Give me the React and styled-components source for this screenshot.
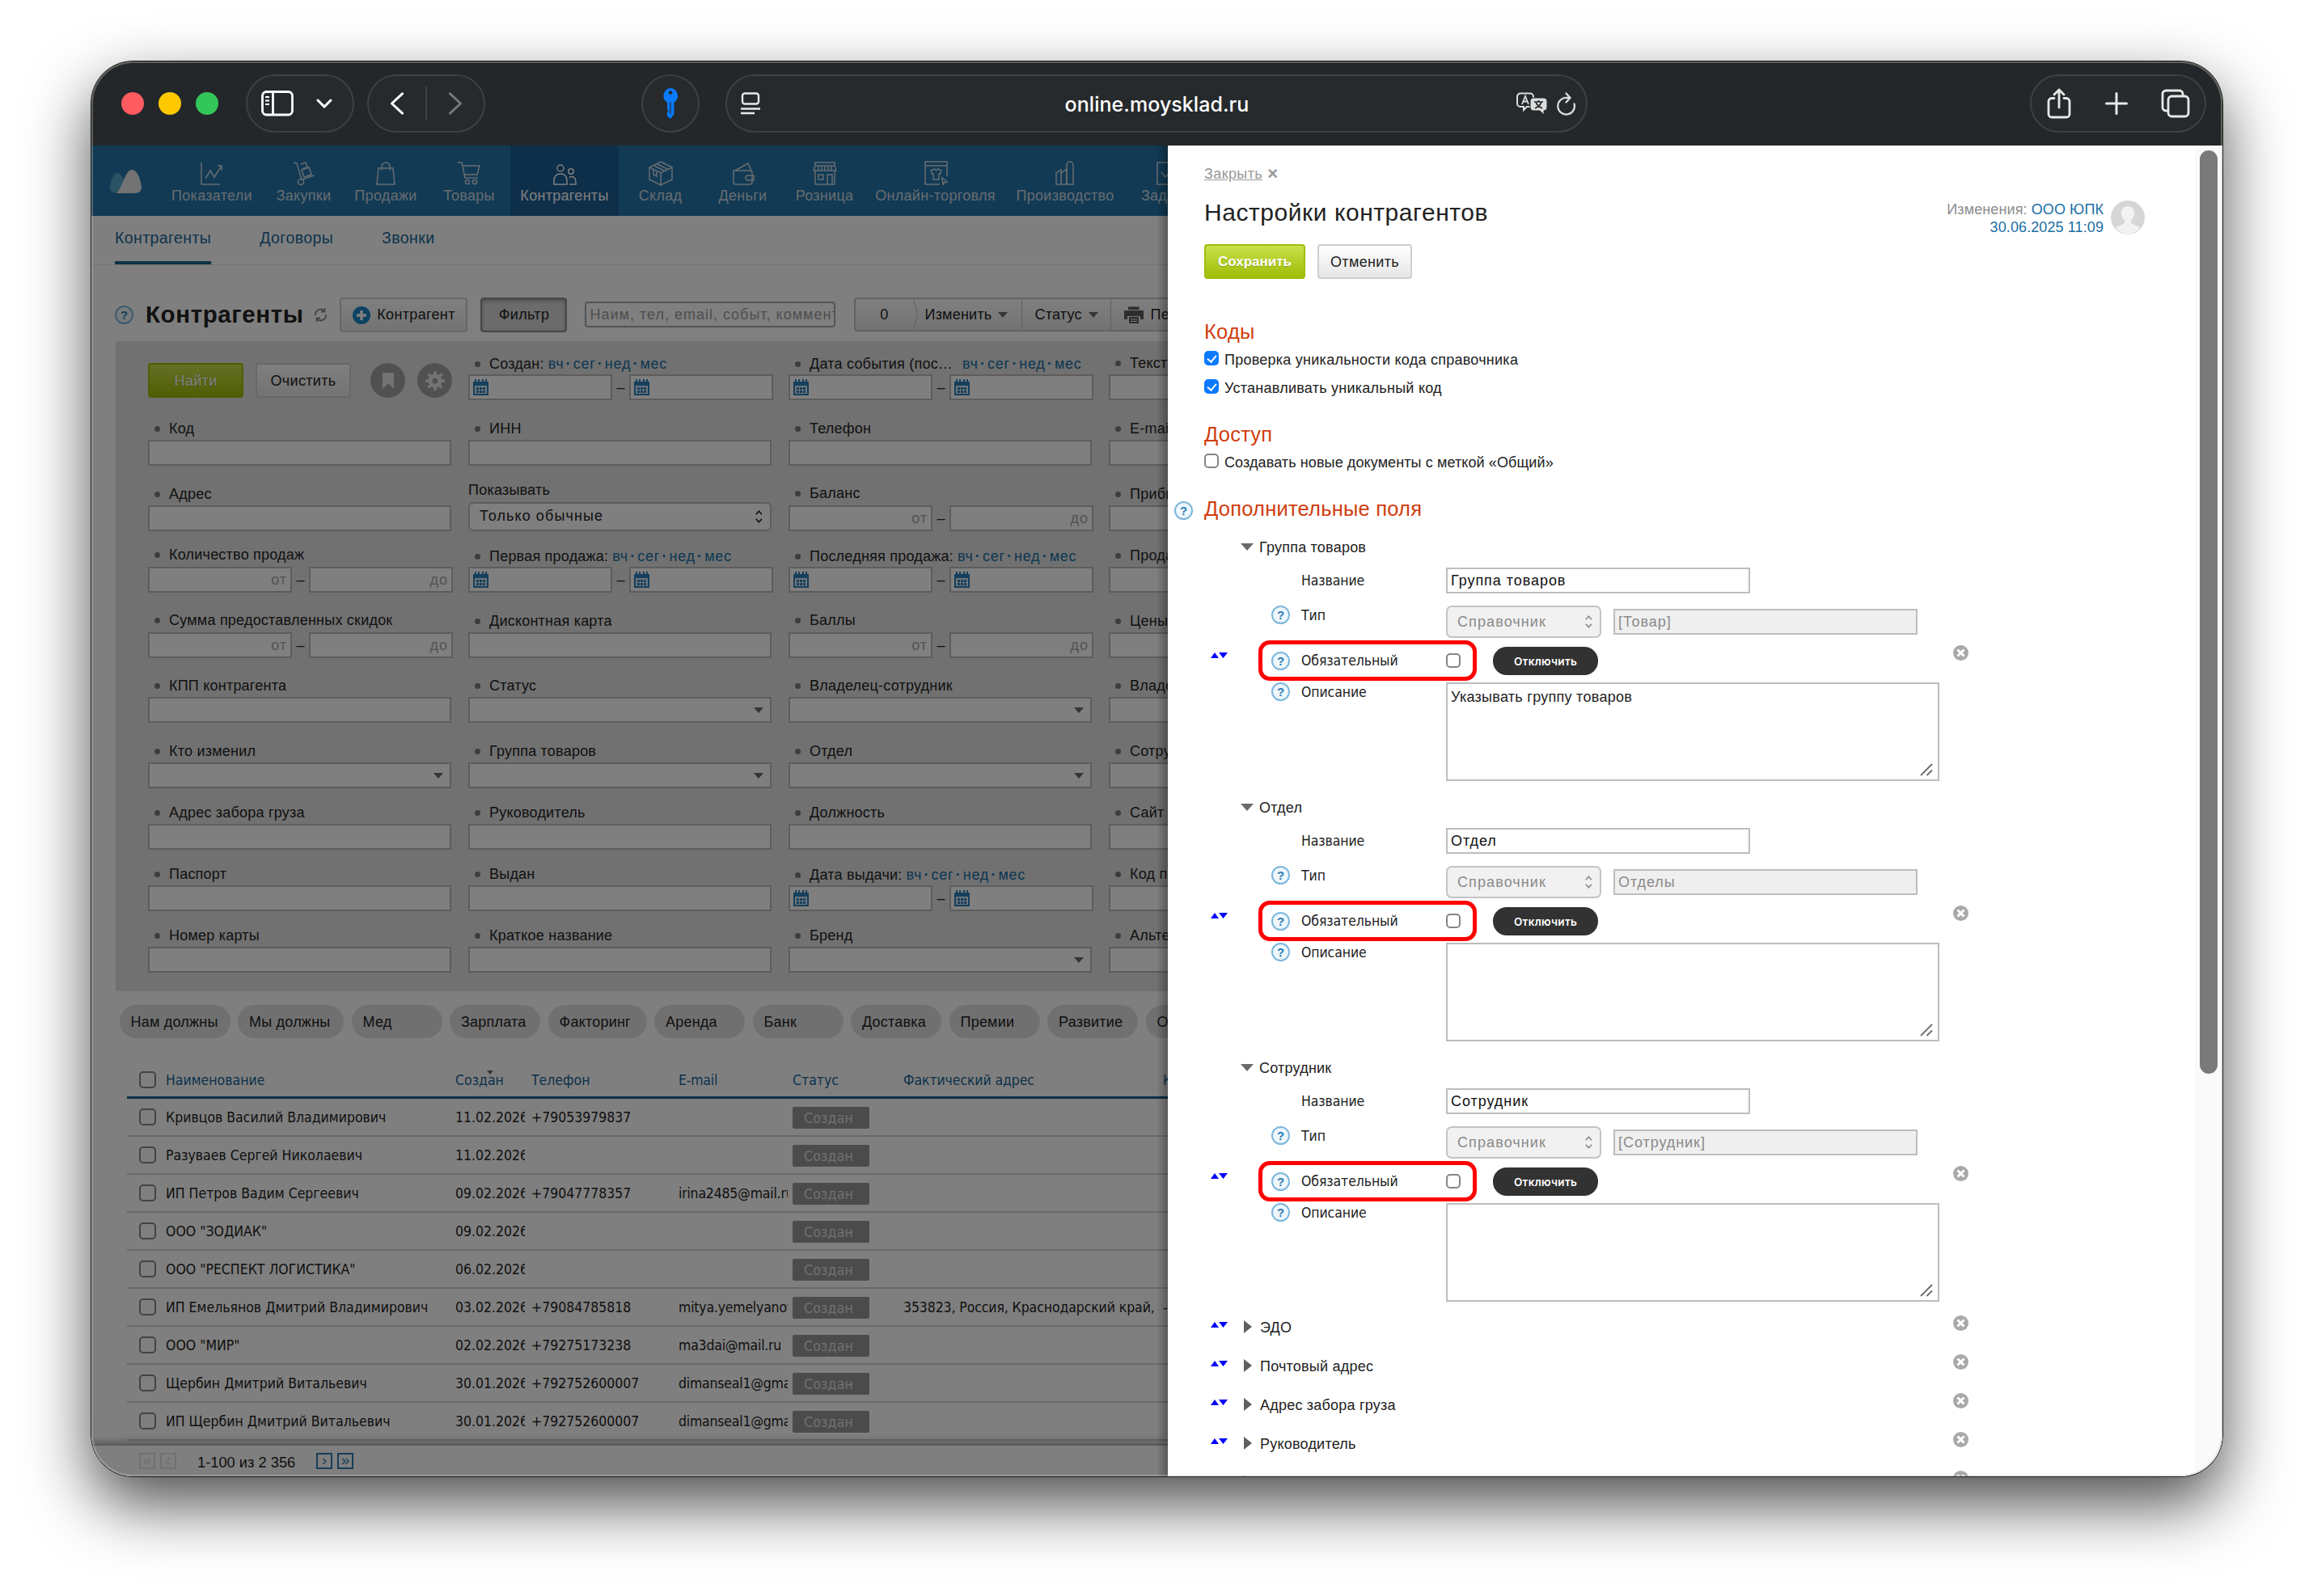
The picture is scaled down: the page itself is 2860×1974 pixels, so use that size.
import { Fragment } from "react";
import styled, { createGlobalStyle, css } from "styled-components";

const sans = `"Liberation Sans", Arial, sans-serif`;
const tahoma = `"DejaVu Sans Condensed", "DejaVu Sans", sans-serif`;

const sections = [
  { label: "Показатели", width: 128, icon: "chart" },
  { label: "Закупки", width: 99, icon: "cart2" },
  { label: "Продажи", width: 104, icon: "bag" },
  { label: "Товары", width: 102, icon: "cart" },
  { label: "Контрагенты", width: 134, icon: "people", active: true },
  { label: "Склад", width: 103, icon: "box" },
  { label: "Деньги", width: 101, icon: "wallet" },
  { label: "Розница", width: 101, icon: "shop" },
  { label: "Онлайн-торговля", width: 173, icon: "online" },
  { label: "Производство", width: 148, icon: "factory" },
  { label: "Задачи", width: 102, icon: "task" },
];

const filterRows = [
  [
    { type: "actions" },
    { label: "Создан:", type: "dates" },
    { label: "Дата события (пос…", type: "dates", wide: true },
    { label: "Текст события" },
  ],
  [
    { label: "Код" },
    { label: "ИНН" },
    { label: "Телефон" },
    { label: "E-mail" },
  ],
  [
    { label: "Адрес" },
    { label: "Показывать", type: "native" },
    { label: "Баланс", type: "range" },
    { label: "Прибыль" },
  ],
  [
    { label: "Количество продаж", type: "range" },
    { label: "Первая продажа:", type: "dates" },
    { label: "Последняя продажа:", type: "dates" },
    { label: "Продажи" },
  ],
  [
    { label: "Сумма предоставленных скидок", type: "range" },
    { label: "Дисконтная карта" },
    { label: "Баллы", type: "range" },
    { label: "Цены" },
  ],
  [
    { label: "КПП контрагента" },
    { label: "Статус", type: "combo" },
    { label: "Владелец-сотрудник", type: "combo" },
    { label: "Владелец-отдел", type: "combo" },
  ],
  [
    { label: "Кто изменил", type: "combo" },
    { label: "Группа товаров", type: "combo" },
    { label: "Отдел", type: "combo" },
    { label: "Сотрудник", type: "combo" },
  ],
  [
    { label: "Адрес забора груза" },
    { label: "Руководитель" },
    { label: "Должность" },
    { label: "Сайт" },
  ],
  [
    { label: "Паспорт" },
    { label: "Выдан" },
    { label: "Дата выдачи:", type: "dates" },
    { label: "Код подразделения" },
  ],
  [
    { label: "Номер карты" },
    { label: "Краткое название" },
    { label: "Бренд", type: "combo" },
    { label: "Альтернативное" },
  ],
];

const chips = [
  { label: "Нам должны", width: 137 },
  { label: "Мы должны", width: 131 },
  { label: "Мед", width: 112 },
  { label: "Зарплата", width: 112 },
  { label: "Факторинг", width: 122 },
  { label: "Аренда", width: 112 },
  { label: "Банк", width: 112 },
  { label: "Доставка", width: 112 },
  { label: "Премии", width: 112 },
  { label: "Развитие", width: 112 },
  { label: "Офис", width: 112 },
];

const rows = [
  ["Кривцов Василий Владимирович", "11.02.2026", "+79053979837", ""],
  ["Разуваев Сергей Николаевич", "11.02.2026", "", ""],
  ["ИП Петров Вадим Сергеевич", "09.02.2026", "+79047778357", "irina2485@mail.ru"],
  ['ООО "ЗОДИАК"', "09.02.2026", "", ""],
  ['ООО "РЕСПЕКТ ЛОГИСТИКА"', "06.02.2026", "", ""],
  [
    "ИП Емельянов Дмитрий Владимирович",
    "03.02.2026",
    "+79084785818",
    "mitya.yemelyanov@mail.ru",
    "353823, Россия, Краснодарский край,",
    "-",
  ],
  ['ООО "МИР"', "02.02.2026", "+79275173238", "ma3dai@mail.ru"],
  ["Щербин Дмитрий Витальевич", "30.01.2026", "+792752600007", "dimanseal1@gmail.com"],
  ["ИП Щербин Дмитрий Витальевич", "30.01.2026", "+792752600007", "dimanseal1@gmail.com"],
];

const fieldGroups = [
  { title: "Группа товаров", ref: "[Товар]", note: "Указывать группу товаров" },
  { title: "Отдел", ref: "Отделы", note: "" },
  { title: "Сотрудник", ref: "[Сотрудник]", note: "" },
];

const collapsedFields = [
  "ЭДО",
  "Почтовый адрес",
  "Адрес забора груза",
  "Руководитель",
  "Должность",
];

const sectionIcons = {
  chart: (
    <>
      <path d="M2 2v27h23" />
      <path d="M7 22l6-10 5 8 9-14M22 6h5v6" />
    </>
  ),
  cart2: (
    <>
      <path d="M2 2l4 1 6 20M13 23l14-5" />
      <circle cx="11" cy="26" r="3.5" />
      <path d="M12 11l9-3 3 9-9 3zM11 4l6-2 2 6-6 2" />
    </>
  ),
  bag: (
    <>
      <path d="M6 9h18l2 20H4z" />
      <path d="M10 12V7a5 5 0 0 1 10 0v5" />
    </>
  ),
  cart: (
    <>
      <path d="M1 2h5l4 19h16M7 6h21l-3 11H9" />
      <circle cx="13" cy="26" r="2.6" />
      <circle cx="22" cy="26" r="2.6" />
    </>
  ),
  people: (
    <>
      <circle cx="10" cy="9" r="4" />
      <path d="M2 29v-4c0-6 3-9 8-9s8 3 8 9v4z" />
      <circle cx="23" cy="13" r="3.2" />
      <path d="M21 20c5-1.500 8 1 8 6v3h-8" />
    </>
  ),
  box: (
    <>
      <path d="M15 1l14 7v15l-14 7L1 23V8zM1 8l14 7 14-7M15 15v15" />
      <path d="M6 5.500l14 7M10 3.500l14 7M6 11v6l4 2v-6" />
    </>
  ),
  wallet: (
    <>
      <path d="M3 12h20a3 3 0 0 1 3 3v11a3 3 0 0 1-3 3H6a3 3 0 0 1-3-3zM3 13L21 3l4 9" />
      <path d="M28 18h-7a3 3 0 0 0 0 6h7z" />
    </>
  ),
  shop: (
    <>
      <path d="M3 2h24v4H3zM3 6l-2 6h28l-2-6M7 6v6M11 6v6M15 6v6M19 6v6M23 6v6" />
      <path d="M3 12v17h24V12M7 17h6v6H7zM18 29V17h6v12" />
    </>
  ),
  online: (
    <>
      <path d="M20 29H2V1h27v18M2 6h27" />
      <path d="M9 12l4-2 2.500 2L18 10l4 2-1.500 4H19v7h-7v-7h-1.500z" />
      <path d="M23 21l6 5-4 1-1 3z" />
    </>
  ),
  factory: (
    <>
      <path d="M4 29V15l6-4v4l7-5v19z" />
      <path d="M17 29V5a3.500 3.500 0 0 1 8 0v24zM10 15v14" />
    </>
  ),
  task: <path d="M4 2h22v27H4zM9 14l5 6 8-10" />,
};

function Help() {
  return <HelpBadge>?</HelpBadge>;
}

function Spinner({ size = 18 }) {
  return (
    <svg width={size * 0.6} height={size} viewBox="0 0 12 20" fill="none">
      <path
        d="M2 7l4-4.500L10 7M2 13l4 4.500L10 13"
        stroke="currentColor"
        strokeWidth="1.800"
      />
    </svg>
  );
}

function Calendar() {
  return (
    <svg width="19" height="20" viewBox="0 0 19 20">
      <path
        d="M0 3h2V0h2v3h2V0h2v3h3V0h2v3h2V0h2v3h2v17H0z"
        fill="#2d7fb8"
      />
      <path d="M2 8h15v10H2z" fill="#dcebf5" />
      <path
        d="M4 10h3v3H4zM8 10h3v3H8zM12 10h3v3h-3zM4 14h3v3H4zM8 14h3v3H8zM12 14h3v3h-3z"
        fill="#2d7fb8"
      />
    </svg>
  );
}

function FilterCell({ cell }) {
  const { label, type, wide } = cell;

  if (type === "actions") {
    return (
      <FilterActions>
        <Button primary width={118}>
          Найти
        </Button>
        <Button width={118}>Очистить</Button>
        <RoundButton first>
          <svg width="16" height="22" viewBox="0 0 16 22">
            <path d="M1 1h14v20l-7-7-7 7z" fill="#e6e6e6" />
          </svg>
        </RoundButton>
        <RoundButton>
          <svg width="26" height="26" viewBox="0 0 26 26">
            <circle cx="13" cy="13" r="6" fill="none" stroke="#e6e6e6" strokeWidth="5" />
            <path
              d="M13 1v24M1 13h24M4.500 4.500l17 17M21.500 4.500l-17 17"
              stroke="#e6e6e6"
              strokeWidth="3.500"
            />
            <circle cx="13" cy="13" r="3.500" fill="#a3a3a3" />
          </svg>
        </RoundButton>
      </FilterActions>
    );
  }

  return (
    <Cell>
      <CellLabel type={type}>
        {type !== "native" && <Bullet />}
        {label}
        {type === "dates" && (
          <Periods wide={wide}>
            вч<i>·</i>сег<i>·</i>нед<i>·</i>мес
          </Periods>
        )}
      </CellLabel>
      {type === "dates" && (
        <Pair>
          <FilterInput>
            <Calendar />
          </FilterInput>
          <Dash>–</Dash>
          <FilterInput>
            <Calendar />
          </FilterInput>
        </Pair>
      )}
      {type === "range" && (
        <Pair>
          <FilterInput end>от</FilterInput>
          <Dash>–</Dash>
          <FilterInput end>до</FilterInput>
        </Pair>
      )}
      {type === "native" && (
        <NativeSelect>
          Только обычные
          <Spinner />
        </NativeSelect>
      )}
      {type === "combo" && (
        <FilterInput end>
          <Caret />
        </FilterInput>
      )}
      {!type && <FilterInput />}
    </Cell>
  );
}

function FieldGroup({ group }) {
  return (
    <Group>
      <Handle top={152}>
        <MoveIcon />
      </Handle>
      <GroupBody>
        <GroupTitle>
          <Caret big />
          {group.title}
        </GroupTitle>
        <FieldRow height={38} center>
          <span />
          <FieldLabel>Название</FieldLabel>
          <TextInput>{group.title}</TextInput>
        </FieldRow>
        <FieldRow height={55} top={12}>
          <Help />
          <FieldLabel>Тип</FieldLabel>
          <TypeFields>
            <DisabledSelect>
              Справочник
              <Spinner />
            </DisabledSelect>
            <TextInput disabled>{group.ref}</TextInput>
          </TypeFields>
        </FieldRow>
        <RequiredRow>
          <Highlight>
            <Help />
            <FieldLabel>Обязательный</FieldLabel>
            <Checkbox />
          </Highlight>
          <DarkButton>Отключить</DarkButton>
        </RequiredRow>
        <FieldRow height={124} top={2}>
          <Help />
          <FieldLabel>Описание</FieldLabel>
          <TextArea>
            {group.note}
            <svg width="16" height="16" viewBox="0 0 16 16">
              <path d="M1 15L15 1M8.500 15L15 8.500" stroke="#6b6b6b" strokeWidth="1.800" />
            </svg>
          </TextArea>
        </FieldRow>
      </GroupBody>
      <Remove top={143} />
    </Group>
  );
}

function MoveIcon() {
  return (
    <svg width="21" height="7" viewBox="0 0 21 7">
      <path d="M0 7l5-7 5 7zM10 0h11l-5.500 7z" fill="#0000ff" />
    </svg>
  );
}

function Remove({ top }) {
  return (
    <RemoveSlot top={top}>
      <svg width="19" height="19" viewBox="0 0 19 19">
        <circle cx="9.500" cy="9.500" r="9.500" fill="#a9a9a9" />
        <path d="M5.500 5.500l8 8M13.500 5.500l-8 8" stroke="#fff" strokeWidth="3" />
      </svg>
    </RemoveSlot>
  );
}

function Toolbar() {
  return (
    <Bar>
      <Lights>
        <Light color="#ff5b60" />
        <Light color="#fdc800" />
        <Light color="#33c759" />
      </Lights>
      <Pill width={134} left={34} pad="0 25px 0 17px">
        <svg width="40" height="32" viewBox="0 0 40 32" fill="none" stroke="#fff" strokeWidth="2.800">
          <rect x="1.500" y="1.500" width="37" height="28.500" rx="5" />
          <path d="M14.500 2v28" />
          <path d="M5 8h5M5 12.500h5M5 17h5" strokeWidth="2" />
        </svg>
        <svg width="20" height="12" viewBox="0 0 20 12" fill="none" stroke="#fff" strokeWidth="3" strokeLinecap="round">
          <path d="M2 2l8 8 8-8" />
        </svg>
      </Pill>
      <Pill width={146} left={16} pad="0 26px">
        <svg width="18" height="28" viewBox="0 0 18 30" fill="none" stroke="#fff" strokeWidth="3.200" strokeLinecap="round" strokeLinejoin="round">
          <path d="M16 2L2 15l14 13" />
        </svg>
        <PillDivider />
        <svg width="18" height="28" viewBox="0 0 18 30" fill="none" stroke="#75797b" strokeWidth="3.200" strokeLinecap="round" strokeLinejoin="round">
          <path d="M2 2l14 13L2 28" />
        </svg>
      </Pill>
      <Pill width={72} left={193} pad="0 24px">
        <svg width="20" height="38" viewBox="0 0 20 38">
          <path
            d="M10 0a9.500 9.500 0 0 1 4.500 17.500V32L10 38l-4-3.500V30l2-2-2-2V17.500A9.500 9.500 0 0 1 10 0z"
            fill="#0a7aff"
          />
          <circle cx="10" cy="5.500" r="2.300" fill="#24282a" />
          <path d="M10 17v15" stroke="#24282a" strokeWidth="1.200" />
        </svg>
      </Pill>
      <Pill width={1066} left={32} pad="0 12px 0 17px">
        <svg width="24" height="28" viewBox="0 0 24 28" fill="none" stroke="#e8e8e8" strokeWidth="2.400">
          <rect x="2" y="1.500" width="20" height="13" rx="3" />
          <path d="M0 20.500h24M0 26h17" />
        </svg>
        <Url>online.moysklad.ru</Url>
        <UrlIcons>
          <svg width="39" height="29" viewBox="0 0 39 29">
            <path
              d="M5 1.500h12a4 4 0 0 1 4 4V14a4 4 0 0 1-4 4h-4l-4 4v-4H5a4 4 0 0 1-4-4V5.500a4 4 0 0 1 4-4z"
              fill="none"
              stroke="#dcdcdc"
              strokeWidth="2"
            />
            <path d="M7 15l4-10 4 10M8.500 11.500h5" fill="none" stroke="#dcdcdc" strokeWidth="1.800" />
            <path
              d="M21 7h13a4 4 0 0 1 4 4v8a4 4 0 0 1-4 4v5l-5-5h-8a4 4 0 0 1-4-4v-8a4 4 0 0 1 4-4z"
              fill="#dcdcdc"
              stroke="#262a2c"
            />
            <path d="M22 12h11M27.500 10v2M31 12c-1 4-4 6-8 8M24 12c1 4 4 6 8 8" fill="none" stroke="#262a2c" strokeWidth="1.700" />
          </svg>
          <svg width="24" height="29" viewBox="0 0 24 29" fill="none" stroke="#dcdcdc" strokeWidth="2.300" strokeLinecap="round">
            <path d="M21.500 14.500a10.300 10.300 0 1 1-9-7.500H16M11.500 1.500l5 5.500-5 5.500" />
          </svg>
        </UrlIcons>
      </Pill>
      <Pill width={218} left={547} pad="0 18px 0 19px">
        <svg width="30" height="38" viewBox="0 0 30 38" fill="none" stroke="#e8e8e8" strokeWidth="2.800" strokeLinecap="round" strokeLinejoin="round">
          <path d="M9 12.500H6a4 4 0 0 0-4 4V32a4 4 0 0 0 4 4h18a4 4 0 0 0 4-4V16.500a4 4 0 0 0-4-4h-3M15 24V2M9 8l6-6 6 6" />
        </svg>
        <svg width="28" height="28" viewBox="0 0 28 28" stroke="#e8e8e8" strokeWidth="3" strokeLinecap="round">
          <path d="M14 1.500v25M1.500 14h25" />
        </svg>
        <svg width="36" height="36" viewBox="0 0 36 36" fill="none" stroke="#e8e8e8" strokeWidth="2.800">
          <path d="M8.500 27H6a4 4 0 0 1-4-4V6a4 4 0 0 1 4-4h17a4 4 0 0 1 4 4v2.500" />
          <rect x="9" y="9" width="25" height="25" rx="4.500" />
        </svg>
      </Pill>
    </Bar>
  );
}

function Drawer() {
  return (
    <DrawerPanel>
      <DrawerHead>
        <div>
          <CloseLink>
            <u>Закрыть</u>
            <b>×</b>
          </CloseLink>
          <DrawerTitle>Настройки контрагентов</DrawerTitle>
          <DrawerButtons>
            <Button primary width={125}>
              <b>Сохранить</b>
            </Button>
            <Button width={117}>Отменить</Button>
          </DrawerButtons>
        </div>
        <Changes>
          <div>
            Изменения: <span>ООО ЮПК</span>
            <br />
            <span>30.06.2025 11:09</span>
          </div>
          <svg width="42" height="42" viewBox="0 0 42 42">
            <circle cx="21" cy="21" r="21" fill="#d6d6d6" />
            <path
              d="M21 7c5 0 8 3.500 8 9 0 4-1.500 7-4 9v3l11 5.500A21 21 0 0 1 21 42 21 21 0 0 1 6 33.500L17 28v-3c-2.500-2-4-5-4-9 0-5.500 3-9 8-9z"
              fill="#f2f2f2"
            />
          </svg>
        </Changes>
      </DrawerHead>

      <Settings>
        <SectionTitle>Коды</SectionTitle>
        <Option>
          <Checkbox checked />
          Проверка уникальности кода справочника
        </Option>
        <Option>
          <Checkbox checked />
          Устанавливать уникальный код
        </Option>
        <SectionTitle top={23}>Доступ</SectionTitle>
        <Option tight>
          <Checkbox />
          Создавать новые документы с меткой «Общий»
        </Option>
        <SectionTitle top={23} help>
          <Help />
          Дополнительные поля
        </SectionTitle>
      </Settings>

      {fieldGroups.map((group) => (
        <FieldGroup key={group.title} group={group} />
      ))}
      {collapsedFields.map((title) => (
        <Group key={title} collapsed>
          <Handle top={14}>
            <MoveIcon />
          </Handle>
          <CollapsedTitle>
            <svg width="10" height="16" viewBox="0 0 10 16">
              <path d="M0 0l10 8-10 8z" fill="#5f5f5f" />
            </svg>
            {title}
          </CollapsedTitle>
          <Remove top={6} />
        </Group>
      ))}
      <ScrollTrack>
        <ScrollThumb />
      </ScrollTrack>
    </DrawerPanel>
  );
}

export default function App() {
  return (
    <Desktop>
      <GlobalStyle />
      <Window>
        <Toolbar />
        <Content>
          <Page>
            <MainNav>
              <Logo>
                <svg width="40" height="30" viewBox="0 0 40 30">
                  <path d="M0 22C1 12 5 4 9 4c4 0 8 6 9 12l-6 12H7c-5 0-7-2-7-6z" fill="#52a5c9" />
                  <path d="M7 29C14 28 18 0 27 0c7 0 11 12 12 21 0 5-3 8-8 8z" fill="#e6e6e6" />
                </svg>
              </Logo>
              {sections.map((item) => (
                <NavItem key={item.label} width={item.width} active={item.active}>
                  <svg width="30" height="31" viewBox="0 0 30 31" fill="none" stroke="currentColor" strokeWidth="1.500">
                    {sectionIcons[item.icon]}
                  </svg>
                  {item.label}
                </NavItem>
              ))}
            </MainNav>
            <SubNav>
              <SubNavItem active>Контрагенты</SubNavItem>
              <SubNavItem>Договоры</SubNavItem>
              <SubNavItem>Звонки</SubNavItem>
            </SubNav>

            <Heading>
              <Help />
              <h1>Контрагенты</h1>
              <svg width="17" height="17" viewBox="0 0 17 17" fill="none" stroke="#8c8c8c" strokeWidth="1.800">
                <path d="M2 9a6.500 6.500 0 0 1 11-5.500M15 8A6.500 6.500 0 0 1 4 13.500M13.500 0v4.500H9M3.500 17v-4.500H8" />
              </svg>
              <Button width={158} left={15}>
                <svg width="22" height="22" viewBox="0 0 22 22">
                  <circle cx="11" cy="11" r="11" fill="#1a86c2" />
                  <path d="M11 5v12M5 11h12" stroke="#fff" strokeWidth="3.500" />
                </svg>
                Контрагент
              </Button>
              <Button pressed width={107} left={16}>
                Фильтр
              </Button>
              <Search>Наим, тел, email, событ, комментарий</Search>
              <ButtonGroup>
                <GroupCount>0</GroupCount>
                <svg width="8" height="40" viewBox="0 0 8 40" fill="none" stroke="#c4c4c4">
                  <path d="M0 0l6 20-6 20" />
                </svg>
                <GroupButton width={127}>
                  Изменить <Caret />
                </GroupButton>
                <GroupButton width={110} pad={15}>
                  Статус <Caret />
                </GroupButton>
                <GroupButton width={130} pad={16}>
                  <svg width="24" height="23" viewBox="0 0 24 23">
                    <path d="M5 1h14v4H5zM0 6h24v11h-4v-4H4v4H0zM6 14h12v8H6z" fill="#5c5c5c" />
                    <path d="M5 1h14v4M8 17h8M8 19.500h8" stroke="#e6e6e6" strokeWidth="1" fill="none" />
                  </svg>
                  Печать
                </GroupButton>
              </ButtonGroup>
            </Heading>

            <Filter>
              {filterRows.map((row, i) => (
                <Fragment key={i}>
                  {row.map((cell, j) => (
                    <FilterCell key={j} cell={cell} />
                  ))}
                </Fragment>
              ))}
            </Filter>

            <Chips>
              {chips.map((chip) => (
                <Chip key={chip.label} width={chip.width}>
                  {chip.label}
                </Chip>
              ))}
            </Chips>

            <Table>
              <TableHead>
                <Checkbox large />
                <span>Наименование</span>
                <SortCell>Создан</SortCell>
                <span>Телефон</span>
                <span>E-mail</span>
                <span>Статус</span>
                <span>Фактический адрес</span>
                <span>Комментарий</span>
              </TableHead>
              {rows.map(([name, created, phone, email, address, comment]) => (
                <TableRow key={name}>
                  <Checkbox large />
                  <span>{name}</span>
                  <span>{created}</span>
                  <span>{phone}</span>
                  <span>{email}</span>
                  <Status>Создан</Status>
                  <span>{address}</span>
                  <span>{comment}</span>
                </TableRow>
              ))}
            </Table>

            <Pager>
              <PagerButton off>«</PagerButton>
              <PagerButton off>‹</PagerButton>
              <PagerText>1-100 из 2 356</PagerText>
              <PagerButton>›</PagerButton>
              <PagerButton>»</PagerButton>
            </Pager>
            <Overlay />
          </Page>
          <Drawer />
        </Content>
      </Window>
    </Desktop>
  );
}

const GlobalStyle = createGlobalStyle`
  * {
    box-sizing: border-box;
  }

  body {
    margin: 0;
    background: #ffffff;
    font-family: ${sans};
    font-size: 18px;
    letter-spacing: 0.22px;
    color: #222222;
  }

  svg {
    flex-shrink: 0;
  }
`;

const Desktop = styled.div`
  width: 2860px;
  height: 1974px;
  padding: 76px 0 0 113px;
  overflow: hidden;
`;

const Window = styled.div`
  position: relative;
  width: 2635px;
  height: 1750px;
  border-radius: 52px;
  overflow: hidden;
  box-shadow:
    0 0 0 1px #1a1a1a,
    0 34px 80px rgba(0, 0, 0, 0.7);

  &::after {
    content: "";
    position: absolute;
    inset: 0;
    border-radius: 52px;
    box-shadow: inset 0 0 0 2px rgba(200, 200, 180, 0.35);
    pointer-events: none;
  }
`;

const Bar = styled.div`
  height: 104px;
  display: flex;
  align-items: center;
  background: #232729;
  padding: 0 0 0 37px;
`;

const Lights = styled.div`
  display: flex;
  gap: 18px;
`;

const Light = styled.div`
  width: 28px;
  height: 28px;
  border-radius: 50%;
  background: ${(props) => props.color};
`;

const Pill = styled.div`
  flex-shrink: 0;
  width: ${(props) => props.width}px;
  height: 72px;
  margin-left: ${(props) => props.left}px;
  padding: ${(props) => props.pad};
  display: flex;
  align-items: center;
  justify-content: space-between;
  border: 2px solid #3d4143;
  border-radius: 36px;
  background: #262a2c;
`;

const PillDivider = styled.div`
  width: 2px;
  height: 42px;
  background: #3d4143;
`;

const Url = styled.div`
  padding-top: 1px;
  font-family: Inter, sans-serif;
  font-size: 25px;
  letter-spacing: 0.05px;
  color: #ffffff;
  font-weight: 500;
  margin-left: 46px;
`;

const UrlIcons = styled.div`
  display: flex;
  gap: 11px;
`;

const Content = styled.div`
  position: relative;
  display: flex;
  height: 1646px;
`;

const Page = styled.div`
  position: relative;
  width: 1331px;
  height: 1646px;
  overflow: hidden;
  display: flex;
  flex-direction: column;
  background: #ffffff;
  white-space: nowrap;
`;

const Overlay = styled.div`
  position: absolute;
  inset: 0;
  background: linear-gradient(
      to left,
      rgba(0, 0, 0, 0.3),
      rgba(0, 0, 0, 0) 14px
    ),
    rgba(0, 0, 0, 0.5);
`;

const MainNav = styled.div`
  flex-shrink: 0;
  display: flex;
  height: 87px;
  background: #2474a8;
`;

const Logo = styled.div`
  flex-shrink: 0;
  width: 85px;
  padding: 30px 0 0 23px;
`;

const NavItem = styled.div`
  flex-shrink: 0;
  width: ${(props) => props.width}px;
  display: flex;
  flex-direction: column;
  align-items: center;
  padding-top: 19px;
  gap: 2px;
  line-height: 20px;
  letter-spacing: 0.3px;
  color: ${(props) => (props.active ? "#ffffff" : "#ccd9e2")};
  background: ${(props) => (props.active ? "#1c5e94" : "none")};
`;

const SubNav = styled.div`
  flex-shrink: 0;
  display: flex;
  gap: 60px;
  height: 61px;
  padding-left: 29px;
  border-bottom: 1px solid #e8e8e8;
`;

const SubNavItem = styled.div`
  height: 60px;
  padding-top: 16px;
  font-size: 19.5px;
  letter-spacing: 0.4px;
  line-height: 22px;
  color: #1a6597;
  border-bottom: ${(props) => (props.active ? "4px solid #17618f" : "none")};
`;

const Heading = styled.div`
  flex-shrink: 0;
  display: flex;
  align-items: center;
  height: 94px;
  padding: 28px 0 0 29px;

  h1 {
    margin: 0 13px 0 15px;
    font-size: 29.5px;
    letter-spacing: 0.6px;
    line-height: 34px;
  }
`;

const HelpBadge = styled.span`
  flex-shrink: 0;
  width: 23px;
  height: 23px;
  display: flex;
  align-items: center;
  justify-content: center;
  border: 2px solid #7db7dc;
  border-radius: 50%;
  background: #eef7fc;
  font-family: ${sans};
  font-size: 15px;
  font-weight: 700;
  line-height: 19px;
  letter-spacing: 0;
  color: #2d7db3;
`;

const Button = styled.button`
  flex-shrink: 0;
  width: ${(props) => props.width}px;
  height: 43px;
  margin: 0 0 0 ${(props) => props.left || 0}px;
  padding: 1px 0 0;
  display: flex;
  align-items: center;
  justify-content: center;
  gap: 8px;
  font-family: ${sans};
  font-size: 18px;
  letter-spacing: 0.35px;
  color: #222222;
  border: 2px solid #cfcfcf;
  border-radius: 4px;
  background: linear-gradient(#ffffff, #e6e6e6);

  ${(props) =>
    props.primary &&
    css`
      color: #ffffff;
      border-color: #9fbd0a;
      background: linear-gradient(#c8e04c, #a1bd07);
      text-shadow: 0 1px 1px rgba(80, 110, 0, 0.4);
    `}

  ${(props) =>
    props.pressed &&
    css`
      border-color: #8c8c8c;
      background: #d6d6d6;
      box-shadow: inset 0 2px 4px rgba(0, 0, 0, 0.3);
    `}
`;

const Search = styled.div`
  flex-shrink: 0;
  width: 310px;
  height: 32px;
  margin-left: 22px;
  padding: 0 4px;
  border: 2px solid #a8a8a8;
  border-radius: 4px;
  overflow: hidden;
  font-size: 18px;
  line-height: 29px;
  letter-spacing: 1px;
  color: #9c9c9c;
`;

const ButtonGroup = styled.div`
  flex-shrink: 0;
  display: flex;
  align-items: center;
  height: 42px;
  margin-left: 23px;
  border: 2px solid #c4c4c4;
  border-radius: 4px;
  background: linear-gradient(#ffffff, #e6e6e6);
`;

const GroupCount = styled.div`
  width: 71px;
  padding-right: 1px;
  text-align: center;
`;

const GroupButton = styled.div`
  width: ${(props) => props.width}px;
  height: 38px;
  padding-left: ${(props) => props.pad || 6}px;
  display: flex;
  align-items: center;
  gap: 8px;
  border-right: 1px solid #bdbdbd;
`;

const Caret = styled.i`
  width: 0;
  height: 0;
  border: ${(props) => (props.big ? 8.5 : 6)}px solid transparent;
  border-top: ${(props) => (props.big ? 9 : 7)}px solid #6a6a6a;
  border-bottom: 0;
`;

const Filter = styled.div`
  flex-shrink: 0;
  height: 804px;
  margin-left: 30px;
  padding-left: 40px;
  display: grid;
  grid-template-columns: repeat(4, 378px);
  grid-template-rows: 73px 81px 81px 76px 81px 80px 81px 76px 76px 76px;
  column-gap: 18px;
  background: #e2e2e2;
`;

const FilterActions = styled.div`
  display: flex;
  align-items: flex-end;
  gap: 15px;
  padding-bottom: 3px;
`;

const RoundButton = styled.div`
  width: 43px;
  height: 43px;
  margin-left: ${(props) => (props.first ? 9 : 0)}px;
  display: flex;
  align-items: center;
  justify-content: center;
  border-radius: 50%;
  background: #a3a3a3;
`;

const Cell = styled.div`
  display: flex;
  flex-direction: column;
  justify-content: flex-end;
`;

const CellLabel = styled.div`
  display: flex;
  align-items: center;
  height: 20px;
  margin-bottom: ${(props) =>
    ({ dates: 3, native: 5, range: 5 })[props.type] || 4}px;
  padding-left: ${(props) => (props.type === "native" ? 0 : 8)}px;
  line-height: 20px;
`;

const Bullet = styled.i`
  width: 7px;
  height: 7px;
  margin-right: 11px;
  border-radius: 50%;
  background: #7a7a7a;
`;

const Periods = styled.span`
  margin-left: ${(props) => (props.wide ? 12 : 5)}px;
  color: #1a6ea5;
  letter-spacing: 0.75px;

  i {
    font-style: normal;
    font-weight: 700;
    margin: 0 2.3px;
  }
`;

const Pair = styled.div`
  display: flex;
  align-items: center;
`;

const Dash = styled.span`
  width: 21px;
  text-align: center;
`;

const FilterInput = styled.div`
  display: flex;
  flex: 0 0 auto;
  align-items: center;
  justify-content: ${(props) => (props.end ? "flex-end" : "flex-start")};
  width: 375px;
  height: 32px;
  padding: 0 8px;
  border: 2px solid #bababa;
  background: #ffffff;
  color: #a6a6a6;
  letter-spacing: 1px;

  ${Pair} & {
    width: 178px;
    padding: 0 4px;
  }
`;

const NativeSelect = styled.div`
  display: flex;
  align-items: center;
  justify-content: space-between;
  width: 375px;
  height: 36px;
  padding: 0 8px 1px 12px;
  border: 2px solid #bababa;
  border-radius: 6px;
  background: #ffffff;
  letter-spacing: 1.1px;
`;

const Chips = styled.div`
  flex-shrink: 0;
  display: flex;
  gap: 9.5px;
  height: 88px;
  padding: 17px 0 0 34.5px;
`;

const Chip = styled.div`
  flex-shrink: 0;
  width: ${(props) => props.width}px;
  height: 41px;
  padding-left: 14px;
  border-radius: 21px;
  line-height: 42px;
  background: #e0e0e0;
`;

const Table = styled.div`
  flex-shrink: 0;
  margin-left: 44px;
  font-family: ${tahoma};
  font-stretch: condensed;
  font-size: 17.5px;
  letter-spacing: 0;
`;

const TableRow = styled.div`
  display: grid;
  grid-template-columns: 33px 358px 94px 182px 135px 143px 313px 200px;
  align-items: center;
  height: 47px;
  padding-left: 15px;
  border-bottom: 2px solid #d4d4d4;

  & > span {
    overflow: hidden;
    line-height: 24px;
  }

  & > span:nth-child(3) {
    margin-right: 8px;
  }

  & > span:nth-child(5) {
    letter-spacing: -0.2px;
  }

  & > span:nth-child(7) {
    letter-spacing: -0.1px;
  }

  & > span:nth-child(8) {
    padding-left: 8px;
  }
`;

const TableHead = styled(TableRow)`
  height: 45px;
  padding-top: 1px;
  border-bottom: 3px solid #17618f;
  color: #1a6597;

  & > span:nth-child(6) {
    padding-left: 6px;
  }
`;

const SortCell = styled.span`
  position: relative;

  &::before {
    content: "";
    position: absolute;
    top: 0;
    left: 39px;
    border: 4px solid transparent;
    border-top: 5px solid #6a6a6a;
    border-bottom: 0;
  }
`;

const Status = styled.div`
  width: 95px;
  height: 27px;
  margin: 1px 0 0 6px;
  padding-left: 14px;
  border-radius: 2px;
  line-height: 28px;
  letter-spacing: 0.2px;
  color: #e0e0e0;
  background: #969696;
`;

const Pager = styled.div`
  position: absolute;
  left: 0;
  right: 0;
  bottom: 0;
  height: 38px;
  display: flex;
  align-items: center;
  gap: 6px;
  padding: 0 0 0 59px;
  background: #ffffff;
  box-shadow:
    0 -2px 0 #b8b8b8,
    0 -4px 10px rgba(0, 0, 0, 0.35);
`;

const PagerButton = styled.div`
  width: 20px;
  height: 20px;
  border: 2px solid ${(props) => (props.off ? "#e0e0e0" : "#2d7db3")};
  color: ${(props) => (props.off ? "#e0e0e0" : "#2d7db3")};
  font-size: 19px;
  line-height: 13px;
  letter-spacing: 0;
  text-align: center;
`;

const PagerText = styled.div`
  width: 161px;
  padding: 4px 0 0 20px;
  font-size: 18.3px;
  letter-spacing: 0;
`;

const DrawerPanel = styled.div`
  position: relative;
  width: 1304px;
  height: 1646px;
  overflow: hidden;
  padding-left: 45px;
  background: #ffffff;
`;

const DrawerHead = styled.div`
  display: flex;
  justify-content: space-between;
  width: 1163px;
  height: 213px;
`;

const CloseLink = styled.div`
  display: flex;
  align-items: center;
  gap: 6px;
  margin-top: 25px;
  line-height: 20px;
  letter-spacing: 0.4px;
  color: #999999;

  b {
    font-size: 22px;
  }
`;

const DrawerTitle = styled.div`
  margin-top: 20px;
  font-size: 30px;
  letter-spacing: 0.55px;
  line-height: 36px;
`;

const DrawerButtons = styled.div`
  display: flex;
  gap: 15px;
  margin-top: 21px;

  b {
    font-weight: 700;
    font-size: 17px;
    letter-spacing: 0;
  }
`;

const Changes = styled.div`
  display: flex;
  align-items: center;
  gap: 9px;
  height: 44px;
  margin-top: 67px;
  line-height: 22px;
  letter-spacing: 0.1px;
  text-align: right;
  color: #8c8c8c;

  div {
    padding-top: 2px;
  }

  span {
    color: #1a6ea5;
  }
`;

const Settings = styled.div`
  height: 262px;
`;

const SectionTitle = styled.div`
  display: flex;
  align-items: center;
  height: 34px;
  margin-top: ${(props) => props.top || 0}px;
  margin-left: ${(props) => (props.help ? -37 : 0)}px;
  gap: 14px;
  font-size: 25.5px;
  color: #d13d0e;

  ${HelpBadge} {
    margin-top: 4px;
  }
`;

const Option = styled.div`
  display: flex;
  align-items: center;
  gap: 7px;
  height: 35px;
  padding-top: 1px;
  letter-spacing: ${(props) => (props.tight ? 0.1 : 0.25)}px;

  & > span {
    margin-top: -4px;
  }
`;

const Checkbox = styled.span`
  flex-shrink: 0;
  width: ${(props) => (props.large ? 21 : 18)}px;
  height: ${(props) => (props.large ? 21 : 18)}px;
  display: flex;
  justify-content: center;
  border: 2px solid #868686;
  border-radius: 5px;
  background: #ffffff;

  ${(props) =>
    props.checked &&
    css`
      border-color: #0a7aff;
      background: #0a7aff;

      &::after {
        content: "";
        width: 5px;
        height: 9px;
        margin-top: 1px;
        border: solid #ffffff;
        border-width: 0 2px 2px 0;
        transform: rotate(40deg);
      }
    `}
`;

const Group = styled.div`
  display: flex;
  height: ${(props) => (props.collapsed ? 48 : 322)}px;
`;

const Handle = styled.div`
  width: 45px;
  padding: ${(props) => props.top}px 0 0 8px;
  line-height: 0;
`;

const GroupBody = styled.div`
  width: 881px;
`;

const GroupTitle = styled.div`
  display: flex;
  align-items: center;
  gap: 7px;
  height: 44px;

  ${Caret} {
    margin-top: -2px;
  }
`;

const FieldRow = styled.div`
  display: grid;
  grid-template-columns: 37px 179px auto;
  align-items: ${(props) => (props.center ? "center" : "start")};
  height: ${(props) => props.height}px;
  padding-top: ${(props) => props.top || 0}px;
  padding-left: 38px;
`;

const FieldLabel = styled.div`
  font-family: ${tahoma};
  font-stretch: condensed;
  font-size: 17.5px;
  letter-spacing: -0.1px;
  line-height: 24px;
`;

const TextInput = styled.div`
  width: 376px;
  height: 32px;
  padding-left: 4px;
  border: 2px solid #bdbdbd;
  line-height: 29px;
  letter-spacing: 0.95px;
  color: ${(props) => (props.disabled ? "#8a8a8a" : "#111111")};
  background: ${(props) => (props.disabled ? "#efefef" : "#ffffff")};
`;

const TypeFields = styled.div`
  display: flex;
  align-items: center;
  gap: 15px;
`;

const DisabledSelect = styled.div`
  width: 192px;
  height: 40px;
  padding: 0 8px 0 12px;
  display: flex;
  align-items: center;
  justify-content: space-between;
  border: 2px solid #c4c4c4;
  border-radius: 7px;
  letter-spacing: 1.1px;
  color: #8a8a8a;
  background: #f1f1f1;
`;

const RequiredRow = styled.div`
  display: flex;
  align-items: center;
  height: 50px;
  padding-left: 22px;
`;

const Highlight = styled.div`
  display: grid;
  grid-template-columns: 37px 179px auto;
  align-items: center;
  width: 270px;
  height: 50px;
  padding-left: 11px;
  border: 5px solid #ff0000;
  border-radius: 14px;
`;

const DarkButton = styled.div`
  width: 130px;
  height: 35px;
  margin-left: 20px;
  border-radius: 17px;
  background: #323232;
  color: #ffffff;
  font-family: Inter, sans-serif;
  font-size: 13.5px;
  font-weight: 600;
  line-height: 36px;
  letter-spacing: 0.3px;
  text-align: center;
`;

const TextArea = styled.div`
  position: relative;
  width: 610px;
  height: 122px;
  padding: 6px 4px;
  border: 2px solid #bdbdbd;
  line-height: 20px;
  letter-spacing: 0.28px;

  svg {
    position: absolute;
    right: 6px;
    bottom: 4px;
  }
`;

const RemoveSlot = styled.div`
  padding-top: ${(props) => props.top}px;
`;

const CollapsedTitle = styled.div`
  display: flex;
  align-items: center;
  gap: 10px;
  width: 881px;
  height: 42px;
  padding-left: 4px;

  svg {
    margin-top: -3px;
  }
`;

const ScrollTrack = styled.div`
  position: absolute;
  top: 0;
  right: 0;
  width: 34px;
  height: 100%;
  padding: 6px 0 0 6px;
  background: #fafafa;
`;

const ScrollThumb = styled.div`
  width: 22px;
  height: 1142px;
  border-radius: 11px;
  background: #7a7a7a;
`;
